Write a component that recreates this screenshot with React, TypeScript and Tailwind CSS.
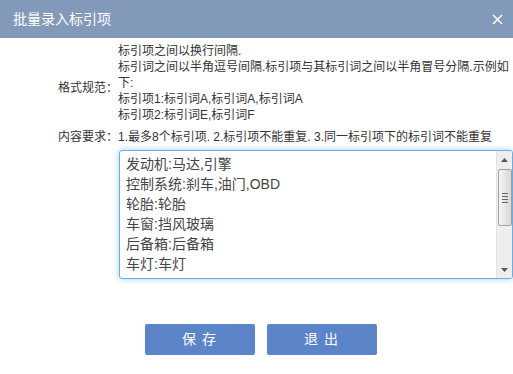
import React from "react";

const lines = [
  "发动机:马达,引擎",
  "控制系统:刹车,油门,OBD",
  "轮胎:轮胎",
  "车窗:挡风玻璃",
  "后备箱:后备箱",
  "车灯:车灯",
];

const FakeScrollbar = () => (
  <div className="w-[16px] h-full bg-[#eeeeee] border-l border-[#e2e2e2] flex flex-col items-center">
    <div className="h-[17px] w-full flex items-center justify-center">
      <svg width="7" height="4" viewBox="0 0 7 4">
        <path d="M3.5 0 L7 4 L0 4 Z" fill="#555" />
      </svg>
    </div>
    <div className="mt-[1px] w-[14px] h-[57px] rounded-[2px] border border-[#a0a0a0] bg-gradient-to-r from-[#f4f4f4] to-[#d8d8d8] flex flex-col items-center justify-center gap-[2px]">
      <div className="w-[6px] h-[1px] bg-[#666]" />
      <div className="w-[6px] h-[1px] bg-[#666]" />
      <div className="w-[6px] h-[1px] bg-[#666]" />
      <div className="w-[6px] h-[1px] bg-[#666]" />
    </div>
    <div className="flex-1" />
    <div className="h-[17px] w-full flex items-center justify-center">
      <svg width="7" height="4" viewBox="0 0 7 4">
        <path d="M0 0 L7 0 L3.5 4 Z" fill="#555" />
      </svg>
    </div>
  </div>
);

export default function App() {
  return (
    <div className="w-[513px] h-[374px] bg-white overflow-hidden font-['Liberation_Sans','Noto_Sans_CJK_SC',sans-serif] text-[#333]">
      <div className="h-[38px] bg-[#8399ba] flex items-center justify-between pl-[13px] pr-[10px] text-white">
        <span className="text-[14px]">批量录入标引项</span>
        <svg width="11" height="11" viewBox="0 0 11 11">
          <path d="M1 1 L10 10 M10 1 L1 10" stroke="#fff" strokeWidth="1.6" />
        </svg>
      </div>

      <div className="pt-[5px]">
        <div className="flex items-center">
          <div className="w-[118px] text-right text-[12px] pt-[10px]">格式规范：</div>
          <div className="w-[392px] text-[12px] leading-[16px]">
            <div>标引项之间以换行间隔.</div>
            <div>标引词之间以半角逗号间隔.标引项与其标引词之间以半角冒号分隔.示例如下:</div>
            <div>标引项1:标引词A,标引词A,标引词A</div>
            <div>标引项2:标引词E,标引词F</div>
          </div>
        </div>

        <div className="flex items-center mt-[6px] text-[12px] leading-[16px]">
          <div className="w-[118px] text-right">内容要求：</div>
          <div>1.最多8个标引项. 2.标引项不能重复. 3.同一标引项下的标引词不能重复</div>
        </div>

        <div className="ml-[119px] mt-[5px] w-[394px] h-[129px] border border-[#66afe9] rounded-[3px] shadow-[0_0_6px_rgba(102,175,233,0.6)] flex overflow-hidden bg-white">
          <div className="flex-1 pl-[6px] pt-[3px] text-[14px] leading-[20px] text-[#444]">
            {lines.map((l, i) => (
              <div key={i}>{l}</div>
            ))}
          </div>
          <FakeScrollbar />
        </div>

        <div className="flex gap-[12px] pl-[145px] mt-[45px]">
          <button className="w-[110px] h-[31px] bg-[#5b84c9] rounded-[2px] text-white text-[14px] tracking-[6px] pl-[4px]">
            保存
          </button>
          <button className="w-[110px] h-[31px] bg-[#5b84c9] rounded-[2px] text-white text-[14px] tracking-[6px] pl-[4px]">
            退出
          </button>
        </div>
      </div>
    </div>
  );
}
